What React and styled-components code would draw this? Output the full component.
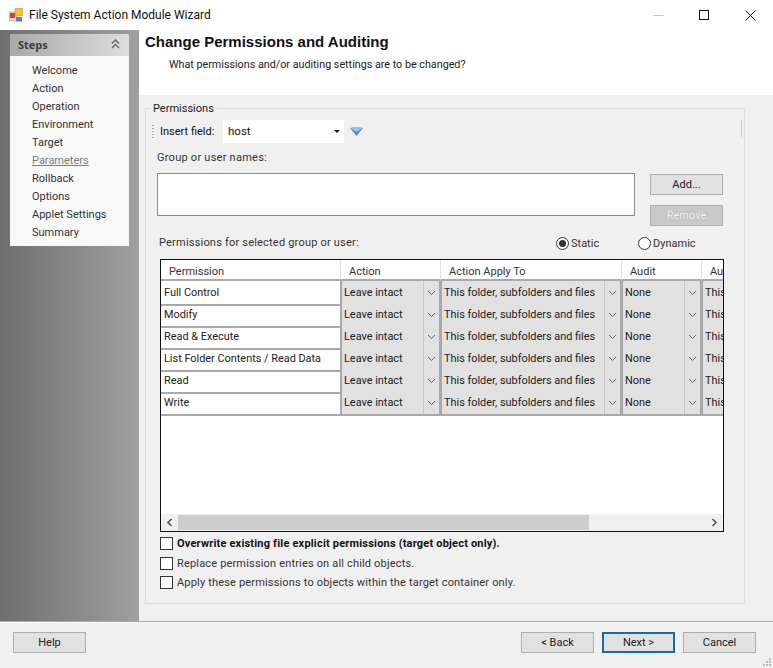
import React from "react";
import styled, { createGlobalStyle } from "styled-components";

const Global = createGlobalStyle`
  html, body { margin: 0; padding: 0; background: #fff; }
  * { box-sizing: border-box; }
  body { font-family: Roboto, "Noto Sans", sans-serif; font-size: 11px; color: #222; }
`;
const Win = styled.div`
  width: 773px; height: 668px; display: flex; flex-direction: column; background: #fff; overflow: hidden;
`;
const TitleBar = styled.div`
  height: 30px; flex: none; display: flex; align-items: center; padding-left: 9px; gap: 6px; color: #111;
`;
const TitleText = styled.span`flex: 1; font-size: 12px;`;
const WinControls = styled.div`display: flex; align-items: center; height: 100%;`;
const WinBtn = styled.div`width: 46px; height: 30px; display: flex; align-items: center; justify-content: center;`;
const Middle = styled.div`flex: 1; display: flex; min-height: 0;`;
const Sidebar = styled.aside`
  width: 139px; flex: none; padding: 4px 10px 0; background: linear-gradient(90deg, #6e6e6e 0%, #a0a0a0 100%);
`;
const StepsCard = styled.div`background: #f8f8f8; height: 212px; border-radius: 3px 3px 0 0;`;
const StepsHead = styled.div`
  height: 22px; display: flex; align-items: center; justify-content: space-between; padding: 0 9px 2px 8px;
  background: linear-gradient(90deg, #a8a8a8, #dedede); border-radius: 3px 3px 0 0;
  font-weight: 700; font-size: 11px; color: #3c3c3c; font-family: "Open Sans", sans-serif;
`;
const StepsList = styled.div`padding: 6px 0 0 22px;`;
const Step = styled.div`
  height: 18px; line-height: 18px; font-size: 11px; color: ${p => (p.$active ? "#7d7d7d" : "#333")};
  text-decoration: ${p => (p.$active ? "underline" : "none")};
`;
const Main = styled.main`flex: 1; display: flex; flex-direction: column; min-width: 0;`;
const Header = styled.header`height: 65px; flex: none; background: #fff; padding: 3px 0 0 6px;`;
const HeaderTitle = styled.div`
  font-family: "Liberation Sans", Arial, sans-serif; font-weight: 700; font-size: 15px; line-height: 18px; color: #111;
`;
const HeaderSub = styled.div`margin: 6px 0 0 24px; font-size: 10.75px; line-height: 15px; color: #222;`;
const Content = styled.div`flex: 1; background: #f0f0f0; padding: 13px 28px 17px 6px; min-height: 0;`;
const Group = styled.section`
  position: relative; height: 100%; border: 1px solid #dcdcdc; padding: 0 11px;
`;
const Legend = styled.span`
  position: absolute; left: 4px; top: -7px; background: #f0f0f0; padding: 0 3px; font-size: 11px; line-height: 14px; color: #222;
`;
const FieldBar = styled.div`display: flex; align-items: center; height: 24px; margin: 10px -11px 0; padding-left: 6px; position: relative;`;
const Grip = styled.div`width: 2px; height: 13px; margin-right: 6px; background-image: linear-gradient(#aaa 50%, transparent 50%); background-size: 2px 3px;`;
const FieldLabel = styled.span`font-size: 11px; color: #111; width: 63px; flex: none;`;
const Select = styled.div`
  width: 121px; height: 23px; background: #fff; display: flex; align-items: center; justify-content: space-between; padding: 0 4px 0 5px; font-size: 11.5px; color: #111;
`;
const Caret = styled.span`width: 0; height: 0; border: 3px solid transparent; border-top: 3px solid #111; border-bottom: 0;`;
const InsertIcon = styled.svg`margin-left: 6px; flex: none;`;
const BarEdge = styled.div`position: absolute; right: 2px; top: 1px; width: 1px; height: 17px; background: #c8c8c8;`;
const Label = styled.div`font-size: 11px; line-height: 15px; color: #333; letter-spacing: ${p => p.$ls || ".2px"}; margin: ${p => p.$m || 0};`;
const NamesRow = styled.div`display: flex; margin-top: 8px; gap: 15px; align-items: flex-start;`;
const NamesBox = styled.div`width: 478px; height: 43px; background: #fff; border: 1px solid #8a8a8a;`;
const SideBtns = styled.div`display: flex; flex-direction: column; gap: 10px; margin-top: 1px;`;
const Btn = styled.button`
  width: 73px; height: 21px; padding: 0; font: inherit; font-size: 11px;
  color: ${p => (p.$disabled ? "#f4f4f4" : "#222")};
  background: ${p => (p.$disabled ? "#c9c9c9" : "#e1e1e1")};
  border: ${p => (p.$primary ? "2px solid #0f6cb5" : "1px solid #adadad")};
  text-shadow: ${p => (p.$disabled ? "0 0 1px #999" : "none")};
`;
const PermHead = styled.div`display: flex; align-items: center; margin-top: 8px; height: 16px; position: relative;`;
const Radios = styled.div`position: absolute; left: 399px; top: 1px; display: flex;`;
const RadioItem = styled.label`display: flex; align-items: center; gap: 2px; font-size: 11px; color: #333; width: ${p => p.$w}px; height: 16px;`;
const Radio = styled.span`
  width: 13px; height: 13px; border-radius: 50%; border: 1px solid #333; background: #fff; display: flex; align-items: center; justify-content: center;
  &::after { content: ""; width: 7px; height: 7px; border-radius: 50%; background: ${p => (p.$on ? "#333" : "transparent")}; }
`;
const GridBox = styled.div`
  margin: 9px 0 0 3px; width: 564px; height: 273px; border: 1px solid #111; background: #fff; display: flex; flex-direction: column; overflow: hidden;
`;
const Rows = styled.div`flex: 1; overflow: hidden; min-height: 0;`;
const GridRow = styled.div`display: grid; grid-template-columns: 180px 100px 181px 80px 100px; height: ${p => (p.$head ? 21 : 22)}px; width: 641px;`;
const HeadCell = styled.div`
  padding-left: 8px; line-height: 23px; height: 21px; overflow: hidden; font-size: 11px; color: #333; border-right: 1px solid #e3e3e3; border-bottom: 2px solid #a9a9a9; white-space: nowrap;
`;
const NameCell = styled.div`
  padding-left: 3px; line-height: 23px; font-size: 10.9px; color: #222; border-bottom: 2px solid #a9a9a9; border-right: 1px solid #a9a9a9; white-space: nowrap;
`;
const ComboCell = styled.div`
  display: flex; background: #e1e1e1; border: solid #a9a9a9; border-width: 0 2px 2px 1px; font-size: 10.9px; line-height: 23px; color: #222; white-space: nowrap; overflow: hidden;
`;
const ComboText = styled.span`flex: 1; padding-left: 2px; overflow: hidden;`;
const ComboArrow = styled.span`width: 16px; flex: none; border-left: 1px solid #c8c8c8; display: flex; align-items: center; justify-content: center;`;
const HBar = styled.div`height: 17px; flex: none; display: flex; background: #f0f0f0; align-items: center;`;
const HBtn = styled.div`width: 17px; height: 17px; display: flex; align-items: center; justify-content: center; flex: none;`;
const HThumb = styled.div`width: 411px; height: 15px; background: #cdcdcd;`;
const HTrack = styled.div`flex: 1;`;
const Checks = styled.div`margin: 2px 0 0 3px;`;
const CheckRow = styled.label`
  display: flex; align-items: center; gap: 4px; height: 19.5px; font-size: 11px; color: ${p => (p.$bold ? "#111" : "#333")};
  font-weight: ${p => (p.$bold ? 700 : 400)}; letter-spacing: ${p => (p.$bold ? ".19px" : ".17px")};
`;
const Box = styled.span`width: 13px; height: 13px; background: #fff; border: 1px solid #333; flex: none;`;
const Footer = styled.footer`
  height: 47px; flex: none; background: #f0f0f0; border-top: 1px solid #a8a8a8; box-shadow: inset 0 1px #fff; display: flex; align-items: center; padding: 0 17px 6px 13px; position: relative;
`;
const Spacer = styled.div`flex: 1;`;
const FooterBtns = styled.div`display: flex; gap: 8px;`;
const Grip2 = styled.svg`position: absolute; right: 1px; bottom: 1px;`;

const steps = ["Welcome", "Action", "Operation", "Environment", "Target", "Parameters", "Rollback", "Options", "Applet Settings", "Summary"];
const perms = ["Full Control", "Modify", "Read & Execute", "List Folder Contents / Read Data", "Read", "Write"];

const Chevron = () => (
  <svg width="9" height="6" viewBox="0 0 9 6"><path d="M1 1l3.5 3.5L8 1" fill="none" stroke="#666" strokeWidth="1" /></svg>
);
const Combo = ({ text }) => (
  <ComboCell>
    <ComboText>{text}</ComboText>
    <ComboArrow><Chevron /></ComboArrow>
  </ComboCell>
);

export default function App() {
  return (
    <Win>
      <Global />
      <TitleBar>
        <svg width="14" height="14" viewBox="0 0 14 14">
          <rect x="0.5" y="4" width="7" height="9" fill="#d9d9d9" stroke="#999" strokeWidth=".5" />
          <rect x="1" y="5" width="5" height="5" fill="#d8401c" />
          <rect x="6" y="0.5" width="7.5" height="7.5" fill="#f2c230" stroke="#b98b1c" strokeWidth=".5" />
          <rect x="7" y="9" width="6" height="4.5" fill="#4a86d8" />
        </svg>
        <TitleText>File System Action Module Wizard</TitleText>
        <WinControls>
          <WinBtn><svg width="11" height="11" viewBox="0 0 11 11"><path d="M0.5 5.5h10" stroke="#c4c4c4" /></svg></WinBtn>
          <WinBtn><svg width="11" height="11" viewBox="0 0 11 11"><rect x="0.5" y="0.5" width="9" height="9" fill="none" stroke="#111" /></svg></WinBtn>
          <WinBtn><svg width="11" height="11" viewBox="0 0 11 11"><path d="M0.5 0.5l10 10M10.5 0.5l-10 10" stroke="#111" /></svg></WinBtn>
        </WinControls>
      </TitleBar>
      <Middle>
        <Sidebar>
          <StepsCard>
            <StepsHead>
              Steps
              <svg width="9" height="10" viewBox="0 0 9 10"><path d="M1 4.5l3.5-3.5L8 4.5M1 9l3.5-3.5L8 9" fill="none" stroke="#666" strokeWidth="1.4" /></svg>
            </StepsHead>
            <StepsList>
              {steps.map(s => <Step key={s} $active={s === "Parameters"}>{s}</Step>)}
            </StepsList>
          </StepsCard>
        </Sidebar>
        <Main>
          <Header>
            <HeaderTitle>Change Permissions and Auditing</HeaderTitle>
            <HeaderSub>What permissions and/or auditing settings are to be changed?</HeaderSub>
          </Header>
          <Content>
            <Group>
              <Legend>Permissions</Legend>
              <FieldBar>
                <Grip />
                <FieldLabel>Insert field:</FieldLabel>
                <Select>host<Caret /></Select>
                <InsertIcon width="13" height="9" viewBox="0 0 13 9">
                  <path d="M0 1h13L6.5 9z" fill="#4f86d9" />
                  <path d="M3 0h7l3 1-6.5 4L0 1z" fill="#9dbdf0" />
                </InsertIcon>
                <BarEdge />
              </FieldBar>
              <Label $m="7px 0 0" $ls=".25px">Group or user names:</Label>
              <NamesRow>
                <NamesBox />
                <SideBtns>
                  <Btn>Add...</Btn>
                  <Btn $disabled>Remove</Btn>
                </SideBtns>
              </NamesRow>
              <PermHead>
                <Label $m="0 0 0 2px">Permissions for selected group or user:</Label>
                <Radios>
                  <RadioItem $w={82}><Radio $on />Static</RadioItem>
                  <RadioItem $w={70}><Radio />Dynamic</RadioItem>
                </Radios>
              </PermHead>
              <GridBox>
                <Rows>
                  <GridRow $head>
                    <HeadCell>Permission</HeadCell>
                    <HeadCell>Action</HeadCell>
                    <HeadCell>Action Apply To</HeadCell>
                    <HeadCell>Audit</HeadCell>
                    <HeadCell>Audit Apply To</HeadCell>
                  </GridRow>
                  {perms.map(p => (
                    <GridRow key={p}>
                      <NameCell>{p}</NameCell>
                      <Combo text="Leave intact" />
                      <Combo text="This folder, subfolders and files" />
                      <Combo text="None" />
                      <Combo text="This folder, subfolders and files" />
                    </GridRow>
                  ))}
                </Rows>
                <HBar>
                  <HBtn><svg width="7" height="9" viewBox="0 0 7 9"><path d="M5.5 1L2 4.5 5.5 8" fill="none" stroke="#555" strokeWidth="1.6" /></svg></HBtn>
                  <HThumb />
                  <HTrack />
                  <HBtn><svg width="7" height="9" viewBox="0 0 7 9"><path d="M1.5 1L5 4.5 1.5 8" fill="none" stroke="#555" strokeWidth="1.6" /></svg></HBtn>
                </HBar>
              </GridBox>
              <Checks>
                <CheckRow $bold><Box />Overwrite existing file explicit permissions (target object only).</CheckRow>
                <CheckRow><Box />Replace permission entries on all child objects.</CheckRow>
                <CheckRow><Box />Apply these permissions to objects within the target container only.</CheckRow>
              </Checks>
            </Group>
          </Content>
        </Main>
      </Middle>
      <Footer>
        <Btn>Help</Btn>
        <Spacer />
        <FooterBtns>
          <Btn>&lt; Back</Btn>
          <Btn $primary>Next &gt;</Btn>
          <Btn>Cancel</Btn>
        </FooterBtns>
        <Grip2 width="10" height="10" viewBox="0 0 10 10" fill="#bdbdbd">
          <rect x="7" y="1" width="2" height="2" /><rect x="4" y="4" width="2" height="2" /><rect x="7" y="4" width="2" height="2" />
          <rect x="1" y="7" width="2" height="2" /><rect x="4" y="7" width="2" height="2" /><rect x="7" y="7" width="2" height="2" />
        </Grip2>
      </Footer>
    </Win>
  );
}
